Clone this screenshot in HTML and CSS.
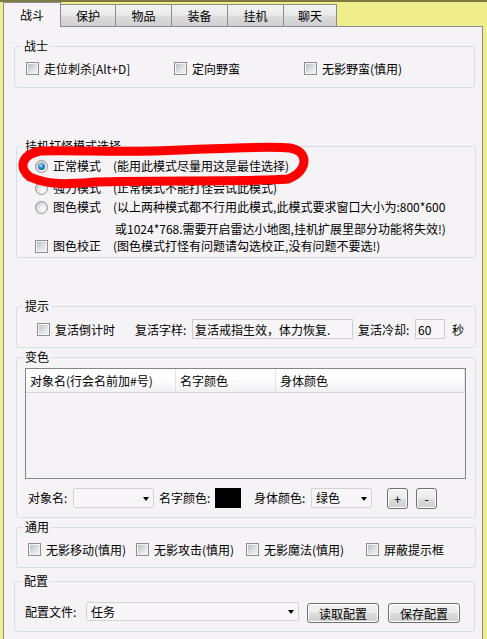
FILE: index.html
```html
<!DOCTYPE html>
<html lang="zh">
<head>
  <meta charset="UTF-8">
  <title>战斗设置</title>
  <link rel="stylesheet" href="styles.css">
</head>
<body>
  <div class="tabs">
    <div class="tab active t58">战斗</div>
    <div class="tab t55">保护</div>
    <div class="tab t56">物品</div>
    <div class="tab t56">装备</div>
    <div class="tab t56">挂机</div>
    <div class="tab t53">聊天</div>
  </div>

  <div class="panel">
    <!-- 战士 -->
    <div class="group wide g-warrior">
      <div class="group-title">战士</div>
      <div class="row-warrior">
        <label class="check w148"><span class="cb"></span>走位刺杀[Alt+D]</label>
        <label class="check w130"><span class="cb"></span>定向野蛮</label>
        <label class="check"><span class="cb"></span>无影野蛮(慎用)</label>
      </div>
    </div>

    <!-- 挂机打怪模式 -->
    <div class="group g-mode">
      <div class="group-title">挂机打怪模式选择</div>
      <div class="modes">
        <div class="opt">
          <span class="rb on"></span>
          <span class="opt-name">正常模式</span>
          <span>(能用此模式尽量用这是最佳选择)</span>
        </div>
        <div class="opt">
          <span class="rb"></span>
          <span class="opt-name">强力模式</span>
          <span>(正常模式不能打怪尝试此模式)</span>
        </div>
        <div class="opt multi">
          <span class="rb"></span>
          <span class="opt-name">图色模式</span>
          <span>(以上两种模式都不行用此模式,此模式要求窗口大小为:800*600<br><span class="wrap">或1024*768.需要开启雷达小地图,挂机扩展里部分功能将失效!)</span></span>
        </div>
        <div class="opt last">
          <span class="cb"></span>
          <span class="opt-name">图色校正</span>
          <span>(图色模式打怪有问题请勾选校正,没有问题不要选!)</span>
        </div>
      </div>
    </div>

    <!-- 提示 -->
    <div class="group g-tip">
      <div class="group-title">提示</div>
      <div class="row-revive">
        <label class="check w98"><span class="cb"></span>复活倒计时</label>
        <span class="lbl w57">复活字样:</span>
        <input class="field w161" type="text" value="复活戒指生效，体力恢复.">
        <span class="lbl w57 ml5">复活冷却:</span>
        <input class="field w30" type="text" value="60">
        <span class="ml7">秒</span>
      </div>
    </div>

    <!-- 变色 -->
    <div class="group g-color">
      <div class="group-title">变色</div>
      <div class="list">
        <div class="list-head">
          <div class="col c150">对象名(行会名前加#号)</div>
          <div class="col c100">名字颜色</div>
          <div class="col c189">身体颜色</div>
        </div>
      </div>
      <div class="edit-row">
        <span class="lbl w45">对象名:</span>
        <div class="combo w81"></div>
        <span class="lbl w56 ml5">名字颜色:</span>
        <div class="swatch"></div>
        <span class="lbl w57 ml13">身体颜色:</span>
        <div class="combo w61">绿色</div>
        <button class="btn small ml15">+</button>
        <button class="btn small ml8">-</button>
      </div>
    </div>

    <!-- 通用 -->
    <div class="group g-general">
      <div class="group-title">通用</div>
      <div class="row-general">
        <label class="check w108"><span class="cb"></span>无影移动(慎用)</label>
        <label class="check w110"><span class="cb"></span>无影攻击(慎用)</label>
        <label class="check w120"><span class="cb"></span>无影魔法(慎用)</label>
        <label class="check"><span class="cb"></span>屏蔽提示框</label>
      </div>
    </div>

    <!-- 配置 -->
    <div class="group wide g-config">
      <div class="group-title">配置</div>
      <div class="row-config">
        <span class="lbl w61">配置文件:</span>
        <div class="combo w213 tall">任务</div>
        <button class="btn wide-btn ml8">读取配置</button>
        <button class="btn wide-btn ml9">保存配置</button>
      </div>
    </div>
  </div>

  <!-- 手画的红圈 -->
  <svg class="mark" width="487" height="639" viewBox="0 0 487 639">
    <path d="M30 177 C19 169 20 155 40 151 C80 150 130 153 180 150 C230 148 270 146 290 148 C309 151 309 171 288 179 C250 182 150 180 95 182 C70 184 50 186 30 177" fill="none" stroke="#f00" stroke-width="9" stroke-linecap="round" stroke-linejoin="round"/>
  </svg>
</body>
</html>
```

FILE: styles.css
```css
html, body {
  overflow: hidden;
}

body {
  margin: 0;
  height: 637px;
  background-color: #f0ee8c;
  border-top: 2px solid #7d7a42;
  font-family: "Noto Sans CJK SC", sans-serif;
  font-size: 12px;
  color: #000;
}

/* onglets */
.tabs {
  display: flex;
  align-items: flex-end;
  height: 24px;
  margin-left: 3px;
}

.tab {
  box-sizing: border-box;
  height: 22px;
  border: 1px solid #898c95;
  border-left: none;
  border-bottom: none;
  background: linear-gradient(#f3f3f3, #ebebeb 45%, #dcdcdc 55%, #cfcfcf);
  text-align: center;
  line-height: 21px;
}

.tab.active {
  position: relative;
  z-index: 1;
  height: 25px;
  margin-bottom: -1px;
  border-left: 1px solid #898c95;
  background: #f6f3f7;
  line-height: 24px;
}

.t58 { width: 58px; }
.t56 { width: 56px; }
.t55 { width: 55px; }
.t53 { width: 53px; }

.panel {
  box-sizing: border-box;
  width: 480px;
  height: 613px;
  margin-left: 3px;
  border: 1px solid #898c95;
  border-bottom: none;
  background: #f6f3f7;
}

/* group boxes */
.group {
  box-sizing: border-box;
  width: 460px;
  margin-left: 12px;
  border: 1px solid #d5dfe5;
  border-radius: 3px;
}

.group.wide {
  width: 461px;
  margin-left: 10px;
}

.group-title {
  width: fit-content;
  height: 14px;
  margin: -8px 0 0 6px;
  padding: 0 2px;
  line-height: 14px;
  background: #f6f3f7;
}

.wide .group-title {
  margin-left: 7px;
}

.g-warrior { margin-top: 19px; height: 42px; }
.g-mode    { margin-top: 58px; height: 112px; }
.g-tip     { margin-top: 48px; height: 42px; }
.g-color   { margin-top: 9px;  height: 161px; }
.g-general { margin-top: 9px;  height: 41px; }
.g-config  { margin-top: 13px; height: 51px; }

/* cases et boutons radio */
.check {
  display: flex;
  align-items: center;
  flex: none;
}

.cb {
  box-sizing: border-box;
  flex: none;
  width: 13px;
  height: 13px;
  margin-right: 5px;
  border: 1px solid #8f8f8f;
  background: linear-gradient(135deg, #b4b9bf, #dfe1e4 55%, #f7f7f7);
  box-shadow: inset 0 0 0 1px #f4f4f4;
}

.rb {
  position: relative;
  box-sizing: border-box;
  flex: none;
  width: 13px;
  height: 13px;
  margin-right: 5px;
  border: 1px solid #929497;
  border-radius: 50%;
  background: radial-gradient(circle at 65% 70%, #ffffff, #e6e7e9 45%, #b9bcc0);
}

.rb.on::after {
  content: "";
  position: absolute;
  left: 2px;
  top: 2px;
  width: 7px;
  height: 7px;
  border-radius: 50%;
  background: radial-gradient(circle at 40% 35%, #9fe0ff, #2a87c8 45%, #0d3f6e);
}

.row-warrior {
  display: flex;
  align-items: center;
  height: 16px;
  margin-top: 7px;
  padding-left: 11px;
}

.modes {
  margin-top: 2px;
  padding-left: 18px;
}

.opt {
  display: flex;
  align-items: flex-start;
  line-height: 22px;
}

.opt .rb,
.opt .cb {
  margin-top: 5px;
}

.opt-name {
  flex: none;
  width: 60px;
}

.opt.multi {
  margin-top: -3px;
}

.opt.multi .wrap {
  padding-left: 2px;
}

.opt.last {
  margin-top: -3px;
  line-height: 18px;
}

.opt.last .cb {
  margin-top: 3px;
}

/* 提示 */
.row-revive {
  display: flex;
  align-items: center;
  height: 20px;
  margin-top: 6px;
  padding-left: 20px;
}

.lbl {
  flex: none;
}

.field {
  box-sizing: border-box;
  height: 20px;
  margin: 0;
  padding: 0 2px;
  border: 1px solid #c9cdd2;
  background: #f7f5f8;
  font: inherit;
  color: #000;
  outline: none;
}

/* liste */
.list {
  box-sizing: border-box;
  width: 441px;
  height: 111px;
  margin: 4px 0 0 8px;
  border: 1px solid #828790;
}

.list-head {
  box-sizing: border-box;
  display: flex;
  height: 24px;
  border-bottom: 1px solid #d5d5d8;
  background: linear-gradient(#ffffff, #ffffff 40%, #f1f1f5);
}

.col {
  box-sizing: border-box;
  padding: 1px 0 0 4px;
  border-right: 1px solid #e3e3e6;
  line-height: 22px;
}

.c150 { width: 150px; }
.c100 { width: 100px; }
.c189 { width: 189px; }

.edit-row {
  display: flex;
  align-items: flex-start;
  height: 21px;
  margin-top: 9px;
  padding-left: 11px;
  line-height: 20px;
}

.combo {
  position: relative;
  box-sizing: border-box;
  flex: none;
  height: 20px;
  padding-left: 4px;
  border: 1px solid #d2d2d4;
  border-radius: 2px;
  background: #f8f6f9;
  line-height: 18px;
}

.combo::after {
  content: "";
  position: absolute;
  right: 4px;
  top: 8px;
  border-left: 3px solid transparent;
  border-right: 3px solid transparent;
  border-top: 4px solid #000;
}

.combo.tall {
  height: 19px;
  line-height: 17px;
}

.combo.tall::after {
  top: 7px;
}

.swatch {
  flex: none;
  width: 26px;
  height: 20px;
  background: #000;
}

.btn {
  box-sizing: border-box;
  flex: none;
  margin-top: 0;
  padding: 0;
  border: 1px solid #707070;
  border-radius: 3px;
  background: linear-gradient(#f2f2f2, #ebebeb 50%, #dddddd 50%, #cfcfcf);
  box-shadow: inset 0 0 0 1px #fcfcfc;
  font: inherit;
  color: #000;
  text-align: center;
}

.btn.small {
  width: 21px;
  height: 21px;
  line-height: 18px;
}

.btn.wide-btn {
  width: 72px;
  height: 20px;
  margin-top: 1px;
  line-height: 17px;
}

.row-general {
  display: flex;
  align-items: center;
  height: 16px;
  margin-top: 7px;
  padding-left: 11px;
}

.row-config {
  display: flex;
  align-items: flex-start;
  height: 21px;
  margin-top: 14px;
  padding-left: 10px;
  line-height: 19px;
}

/* largeurs */
.w30 { width: 30px; }
.w45 { width: 45px; }
.w56 { width: 56px; }
.w57 { width: 57px; }
.w61 { width: 61px; }
.w81 { width: 81px; }
.w98 { width: 98px; }
.w108 { width: 108px; }
.w110 { width: 110px; }
.w120 { width: 120px; }
.w130 { width: 130px; }
.w148 { width: 148px; }
.w161 { width: 161px; }
.w213 { width: 213px; }

.ml5 { margin-left: 5px; }
.ml7 { margin-left: 7px; }
.ml8 { margin-left: 8px; }
.ml9 { margin-left: 9px; }
.ml13 { margin-left: 13px; }
.ml15 { margin-left: 15px; }

.mark {
  position: absolute;
  top: 0;
  left: 0;
  pointer-events: none;
}
```
